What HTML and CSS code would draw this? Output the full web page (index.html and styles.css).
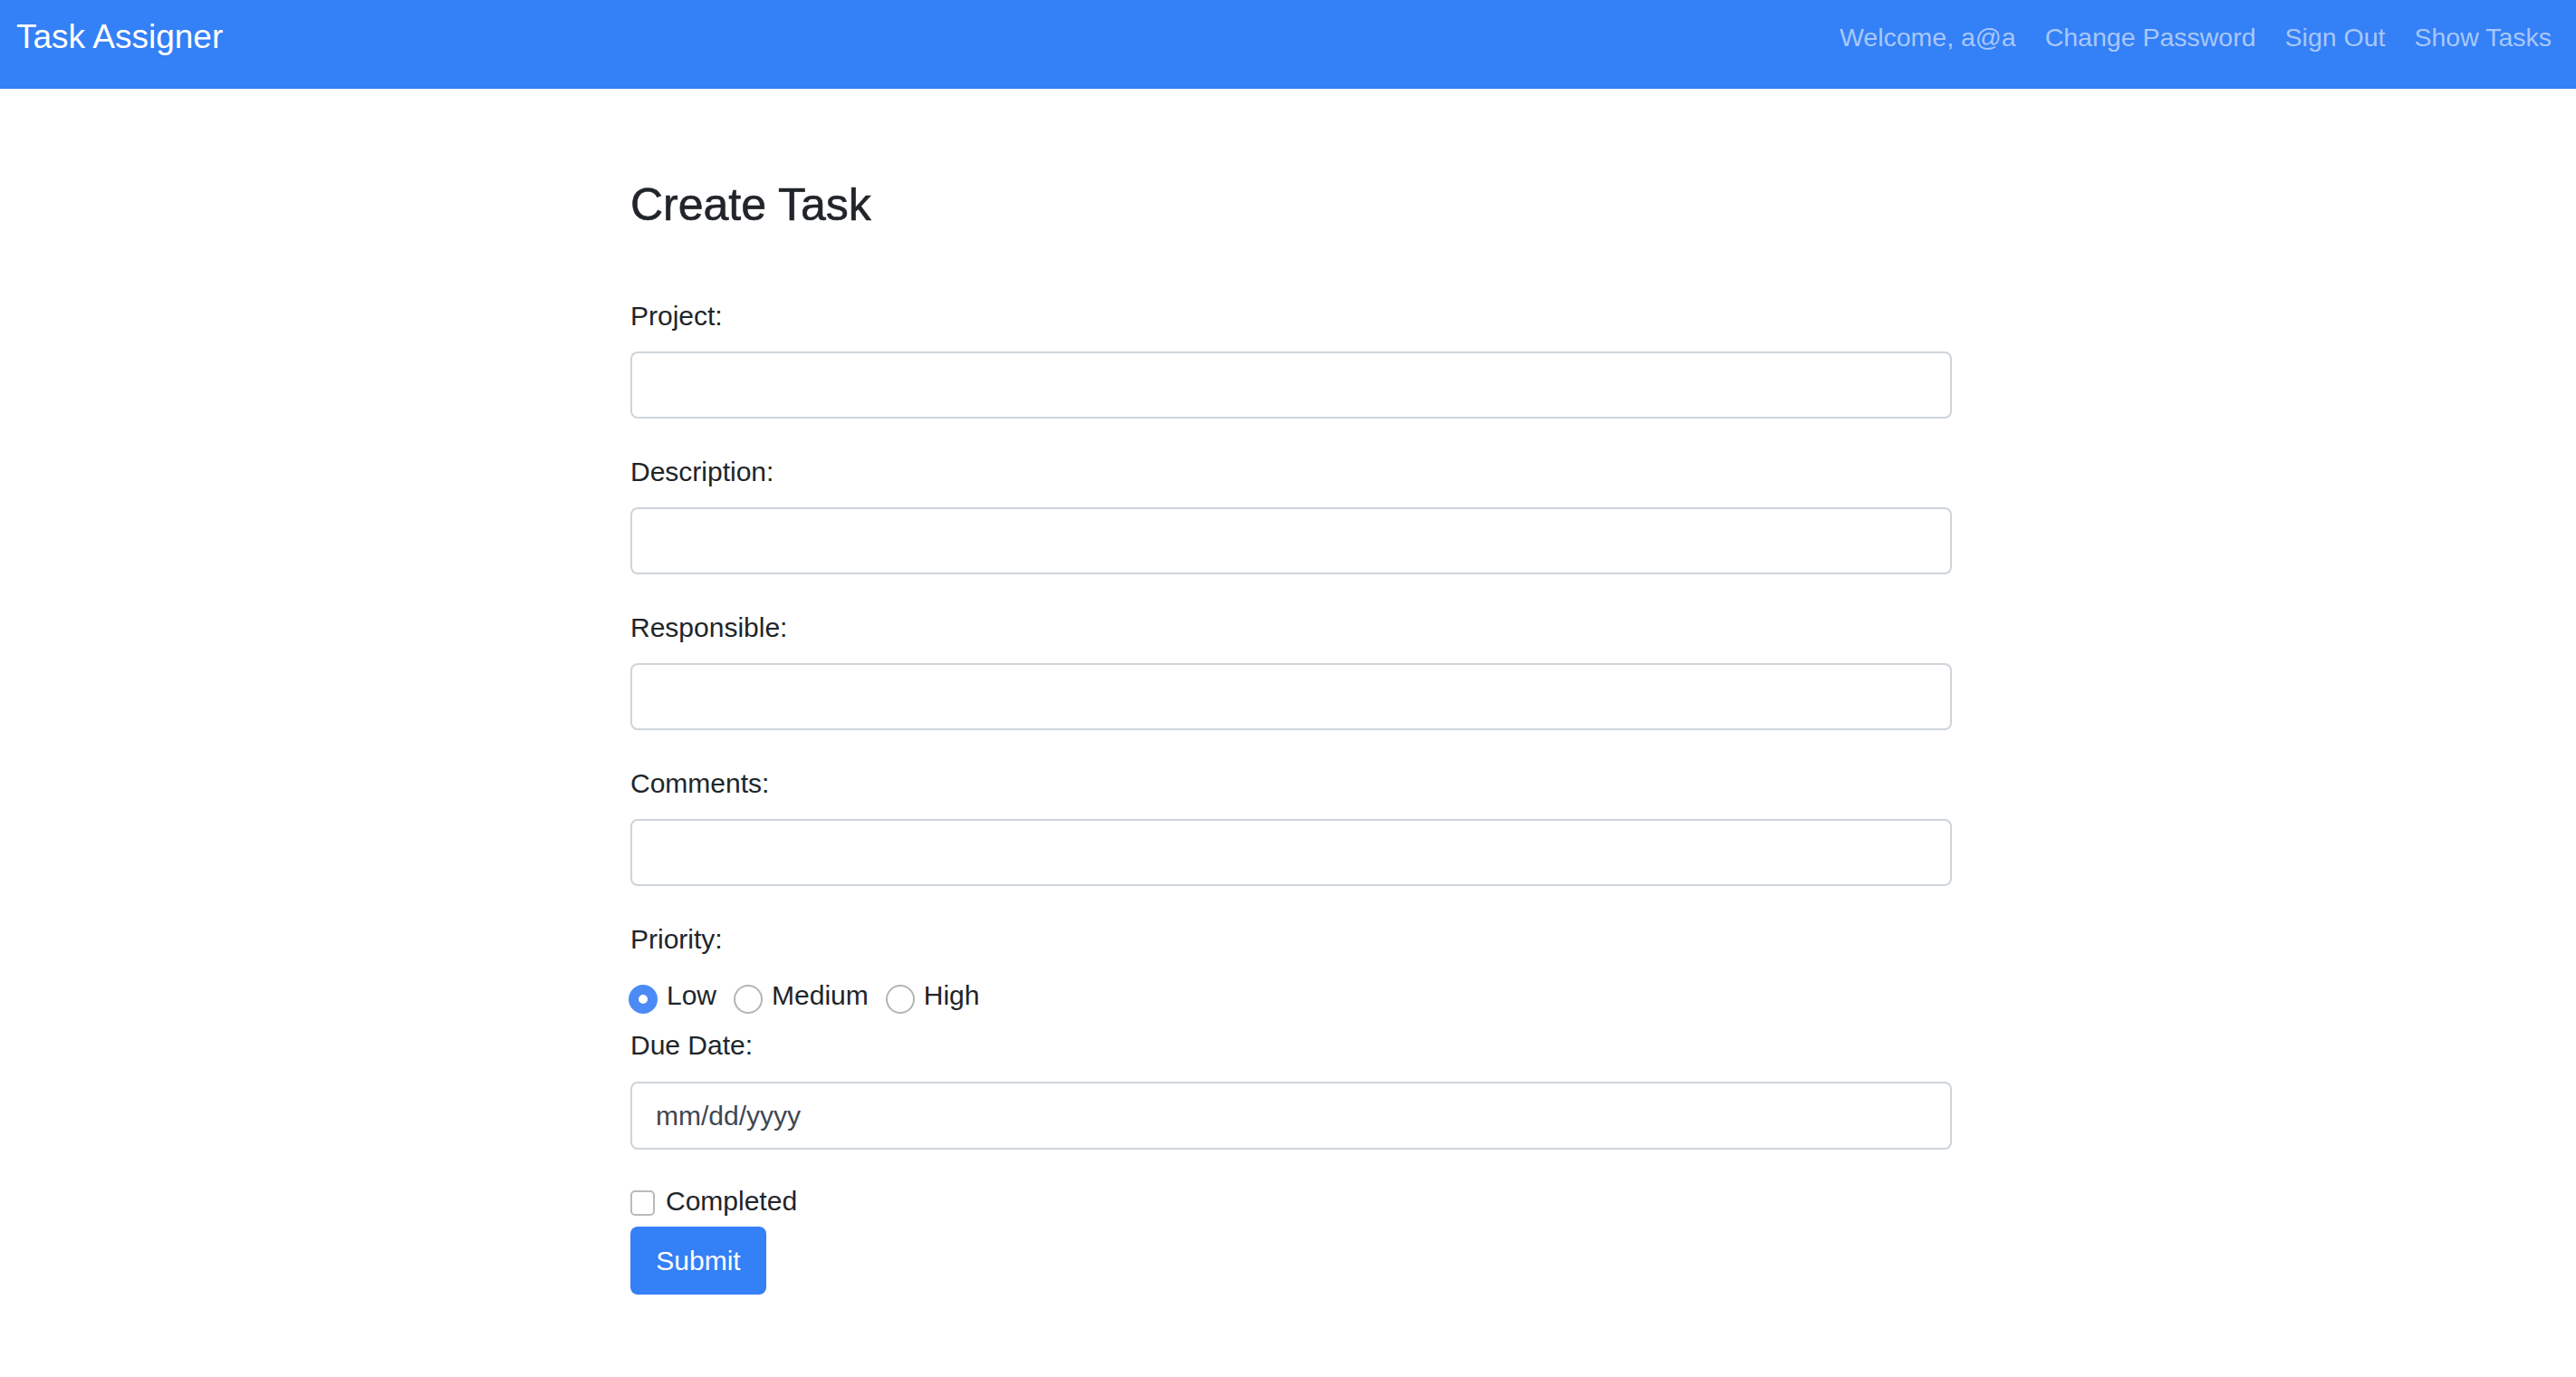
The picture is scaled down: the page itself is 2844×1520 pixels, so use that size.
FILE: index.html
```html
<!DOCTYPE html>
<html lang="en">
<head>
<meta charset="utf-8">
<title>Task Assigner</title>
<link rel="stylesheet" href="styles.css">
</head>
<body>
<nav class="navbar">
  <a class="brand" href="#">Task Assigner</a>
  <div class="nav-links">
    <span class="nav-link">Welcome, a@a</span>
    <a class="nav-link" href="#">Change Password</a>
    <a class="nav-link" href="#">Sign Out</a>
    <a class="nav-link" href="#">Show Tasks</a>
  </div>
</nav>
<main class="container">
  <h2 class="title">Create Task</h2>
  <form class="task-form">
    <div class="field">
      <label class="label" for="project">Project:</label>
      <input class="input" id="project" type="text">
    </div>
    <div class="field">
      <label class="label" for="description">Description:</label>
      <input class="input" id="description" type="text">
    </div>
    <div class="field">
      <label class="label" for="responsible">Responsible:</label>
      <input class="input" id="responsible" type="text">
    </div>
    <div class="field">
      <label class="label" for="comments">Comments:</label>
      <input class="input" id="comments" type="text">
    </div>
    <div class="field field-priority">
      <label class="label">Priority:</label>
      <div class="radios">
        <label class="option"><input class="radio" type="radio" name="priority" checked><span>Low</span></label>
        <label class="option"><input class="radio" type="radio" name="priority"><span>Medium</span></label>
        <label class="option"><input class="radio" type="radio" name="priority"><span>High</span></label>
      </div>
    </div>
    <div class="field field-date">
      <label class="label" for="due">Due Date:</label>
      <input class="input input-date" id="due" type="text" placeholder="mm/dd/yyyy">
    </div>
    <label class="check"><input class="checkbox" type="checkbox"><span>Completed</span></label>
    <button class="submit" type="submit">Submit</button>
  </form>
</main>
</body>
</html>
```

FILE: styles.css
```css
html, body {
  margin: 0;
  padding: 0;
  background: #ffffff;
}

body {
  font-family: "Liberation Sans", Arial, sans-serif;
  color: #212529;
}

.navbar {
  display: flex;
  justify-content: space-between;
  align-items: flex-start;
  height: 98px;
  box-sizing: border-box;
  padding: 0 27px 0 18px;
  background: #3480f6;
}

.brand {
  margin-top: 15px;
  font-size: 37px;
  line-height: 51px;
  color: #ffffff;
  text-decoration: none;
}

.nav-links {
  display: flex;
  gap: 32px;
  margin-top: 20px;
  font-size: 28.5px;
  line-height: 42px;
}

.nav-link {
  color: rgba(255, 255, 255, 0.58);
  text-decoration: none;
}

.container {
  width: 1459px;
  margin: 0 auto;
  padding-left: 7px;
}

.title {
  margin: 98px 0 70px;
  font-size: 50px;
  line-height: 60px;
  font-weight: 400;
  color: #212529;
  -webkit-text-stroke: 0.6px #212529;
}

.field {
  margin-bottom: 36px;
}

.field-priority {
  margin-bottom: 10px;
}

.field-date {
  margin-bottom: 34px;
}

.label {
  display: block;
  margin-bottom: 17px;
  font-size: 30px;
  line-height: 45px;
}

.input {
  display: block;
  width: 100%;
  height: 74px;
  box-sizing: border-box;
  margin: 0;
  padding: 0 26px;
  border: 2px solid #ced4da;
  border-radius: 8px;
  background: #ffffff;
  font-family: inherit;
  font-size: 30px;
  color: #495057;
  outline: none;
}

.field-date .label {
  margin-bottom: 18px;
}

.input-date {
  height: 75px;
}

.input-date::placeholder {
  color: #3f4750;
  opacity: 1;
}

.radios {
  display: flex;
  height: 45px;
  font-size: 30px;
  line-height: 45px;
}

.option {
  display: flex;
  align-items: flex-start;
  margin-right: 21px;
}

.radio {
  appearance: none;
  -webkit-appearance: none;
  width: 32px;
  height: 32px;
  box-sizing: border-box;
  margin: 11px 10px 0 -2px;
  border: 2px solid #b4b4b4;
  border-radius: 50%;
  background: #ffffff;
}

.radio:checked {
  border: 11px solid #4c8bf5;
}

.check {
  display: flex;
  align-items: flex-start;
  height: 45px;
  margin-bottom: 6px;
  font-size: 30px;
  line-height: 45px;
}

.checkbox {
  appearance: none;
  -webkit-appearance: none;
  width: 27px;
  height: 28px;
  box-sizing: border-box;
  margin: 11px 12px 0 0;
  border: 2px solid #bababa;
  border-radius: 5px;
  background: #ffffff;
}

.submit {
  display: block;
  width: 150px;
  height: 75px;
  padding: 0;
  border: none;
  border-radius: 8px;
  background: #3480f6;
  color: #ffffff;
  font-family: inherit;
  font-size: 30px;
  cursor: pointer;
}
```
